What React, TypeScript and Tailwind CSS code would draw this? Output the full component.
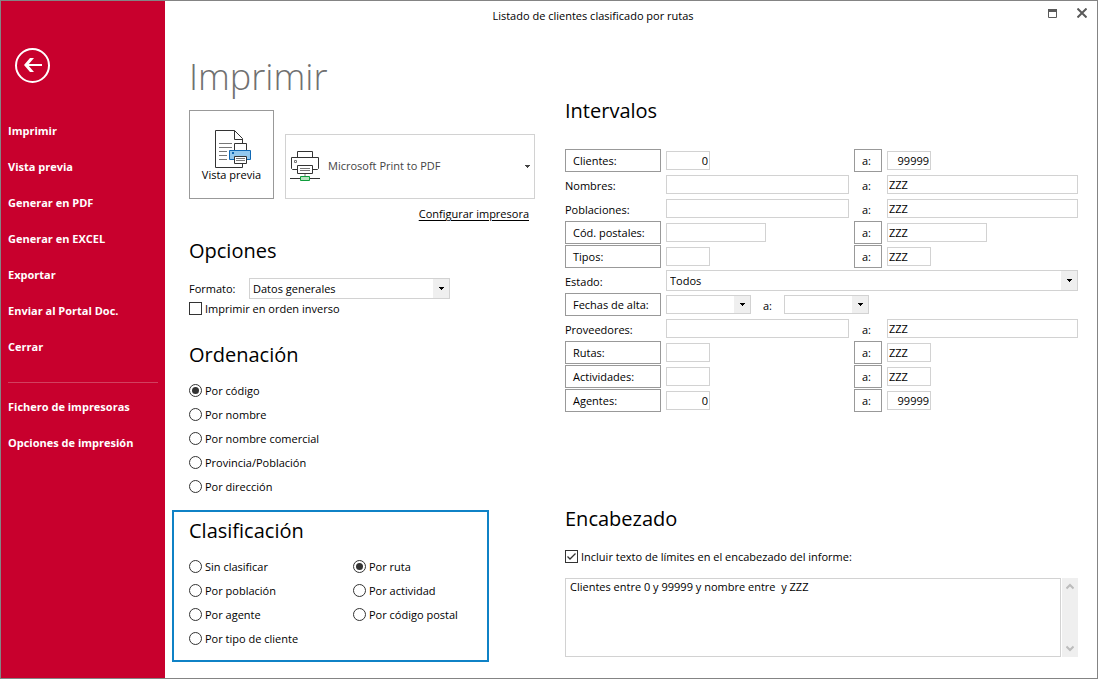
import React, { useState } from "react";

type Option = { value: string; label: string };

const menuItems = [
  "Imprimir",
  "Vista previa",
  "Generar en PDF",
  "Generar en EXCEL",
  "Exportar",
  "Enviar al Portal Doc.",
  "Cerrar",
];

const configItems = ["Fichero de impresoras", "Opciones de impresión"];

const sortOptions: Option[] = [
  { value: "codigo", label: "Por código" },
  { value: "nombre", label: "Por nombre" },
  { value: "comercial", label: "Por nombre comercial" },
  { value: "provincia", label: "Provincia/Población" },
  { value: "direccion", label: "Por dirección" },
];

const groupOptions: Option[] = [
  { value: "ninguno", label: "Sin clasificar" },
  { value: "poblacion", label: "Por población" },
  { value: "agente", label: "Por agente" },
  { value: "tipo", label: "Por tipo de cliente" },
  { value: "ruta", label: "Por ruta" },
  { value: "actividad", label: "Por actividad" },
  { value: "postal", label: "Por código postal" },
];

const PreviewIcon = () => (
  <svg width="39" height="38" viewBox="-3 0 39 38" fill="none" aria-hidden="true">
    <path d="M.5.5H19.5L27.5 8.5V37.5H.5Z" fill="#fff" stroke="#333" />
    <path d="M19.5.5V9.5H27.5" stroke="#333" />
    <path d="M4 13.5H17M4 17.5H17M4 21.5H12M4 25.5H12M4 29.5H12" stroke="#777" />
    <path d="M19.5 20V13.5H31.5V20" fill="#fff" stroke="#333" />
    <path d="M14.5 20.5H35.5V29.5H14.5Z" fill="#92c8ee" stroke="#0f68b4" />
    <path d="M17 22H19V24H17Z" fill="#0f68b4" />
    <path d="M19.5 26.5H31.5V33.5H19.5Z" fill="#fff" stroke="#333" />
    <path d="M21 28.5H30M21 30.5H30" stroke="#777" />
  </svg>
);

const PrinterIcon = () => (
  <svg width="30" height="31" viewBox="0 0 30 31" fill="none" aria-hidden="true">
    <path d="M7.5 6.5V.5H22.5V6.5" stroke="#333" />
    <path d="M7.5 18.5H2.5L1.5 17.5V6.5H28.5V17.5L27.5 18.5H22.5" stroke="#333" />
    <path d="M4.5 9.5H6.5V11.5H4.5Z" stroke="#777" />
    <path d="M7.5 14.5H22.5V22.5H7.5Z" fill="#fff" stroke="#333" />
    <path d="M10 17.5H20M10 19.5H20" stroke="#777" />
    <path d="M15 23V25" stroke="#bbb" strokeWidth="2" />
    <path d="M0 27.5H10M20 27.5H30" stroke="#333" />
    <path d="M10.5 25.5H19.5V29.5H10.5Z" fill="#b5e3be" stroke="#0f9d3c" />
  </svg>
);

const ArrowDown = () => (
  <svg width="5" height="3" viewBox="0 0 5 3" aria-hidden="true">
    <path d="M0 0H5V1H4V2H3V3H2V2H1V1H0Z" fill="currentColor" />
  </svg>
);

const Heading = ({ children }: { children: React.ReactNode }) => (
  <h2 className="text-[20px] leading-7">{children}</h2>
);

type SelectProps = {
  id?: string;
  label?: string;
  options: string[];
  className: string;
};

const Select: React.FC<SelectProps> = ({ id, label, options, className }) => (
  <div className={`grid border border-[#d2d2d2] ${className}`}>
    <select
      id={id}
      aria-label={label}
      className="col-start-1 row-start-1 h-full w-full min-w-0 appearance-none bg-white pl-[3px] pr-5 text-[11px] leading-4"
    >
      {options.map((option) => (
        <option key={option}>{option}</option>
      ))}
    </select>
    <span className="pointer-events-none col-start-1 row-start-1 flex w-4 items-center justify-center justify-self-end bg-[#efefef]">
      <ArrowDown />
    </span>
  </div>
);

type RadioProps = {
  name: string;
  option: Option;
  selected: string;
  onSelect: (value: string) => void;
};

const Radio: React.FC<RadioProps> = ({ name, option, selected, onSelect }) => (
  <label className="flex h-6 items-center gap-[3px]">
    <input
      type="radio"
      name={name}
      checked={selected === option.value}
      onChange={() => onSelect(option.value)}
      className="mb-px size-[13px] appearance-none rounded-full border border-[#333] bg-clip-content p-[2px] checked:bg-[#333]"
    />
    {option.label}
  </label>
);

const Checkbox = ({ label, defaultChecked }: { label: string; defaultChecked?: boolean }) => (
  <label className="flex h-4 items-center gap-[3px]">
    <span className="mb-px grid">
      <input
        type="checkbox"
        defaultChecked={defaultChecked}
        className="peer col-start-1 row-start-1 size-[13px] appearance-none border border-[#333] bg-white"
      />
      <svg
        width="13"
        height="13"
        viewBox="0 0 13 13"
        fill="none"
        className="pointer-events-none invisible col-start-1 row-start-1 peer-checked:visible"
      >
        <path d="M2.5 6.5L5 9L10.5 3.5" stroke="#333" strokeWidth="1.3" />
      </svg>
    </span>
    {label}
  </label>
);

type RangeRowProps = {
  id: string;
  label: string;
  lookup?: boolean;
  size: "short" | "medium" | "full";
  from?: string;
  to: string;
  numeric?: boolean;
};

const widths = {
  short: "w-11",
  medium: "w-[100px]",
  full: "w-full",
};

const RangeRow: React.FC<RangeRowProps> = ({ id, label, lookup, size, from = "", to, numeric }) => {
  const field = `h-[19px] min-w-0 border border-[#d2d2d2] px-px pb-px text-[11px] leading-4 ${widths[size]} ${
    numeric ? "text-right" : ""
  }`;

  return (
    <>
      {lookup ? (
        <button type="button" className="h-[23px] border border-[#999] pl-[7px] text-left">
          {label}
        </button>
      ) : (
        <label htmlFor={`${id}-desde`} className="pt-[2px]">
          {label}
        </label>
      )}
      <input id={`${id}-desde`} aria-label={`${label} desde`} defaultValue={from} className={field} />
      {lookup ? (
        <button type="button" className="h-[23px] border border-[#999] pl-[7px] text-left">
          a:
        </button>
      ) : (
        <label htmlFor={`${id}-hasta`} className="pl-2 pt-[2px]">
          a:
        </label>
      )}
      <input id={`${id}-hasta`} aria-label={`${label} hasta`} defaultValue={to} className={field} />
    </>
  );
};

const Sidebar = () => (
  <nav className="w-[164px] shrink-0 bg-[#c8002d] px-[7px] pt-[47px] text-[11px] font-bold leading-4 text-white">
    <button type="button" aria-label="Volver" className="ml-[7px] block">
      <svg width="35" height="35" viewBox="0 0 35 35" fill="none">
        <circle cx="17.5" cy="17.5" r="16.5" stroke="#fff" strokeWidth="2" />
        <path d="M27 17H11" stroke="#fff" strokeWidth="2" />
        <path d="M15 10H19L13 17L19 24H15L9 17Z" fill="#fff" />
      </svg>
    </button>
    <ul className="mt-[30px]">
      {menuItems.map((item) => (
        <li key={item}>
          <button type="button" className="flex h-9 w-full items-center">
            {item}
          </button>
        </li>
      ))}
    </ul>
    <hr className="mb-[6px] mt-[17px] border-[#d2405f]" />
    <ul>
      {configItems.map((item) => (
        <li key={item}>
          <button type="button" className="flex h-9 w-full items-center">
            {item}
          </button>
        </li>
      ))}
    </ul>
  </nav>
);

const TitleBar = () => (
  <header className="flex h-[30px] items-center">
    <p className="flex-1 text-center">Listado de clientes clasificado por rutas</p>
    <div className="ml-4 flex items-center pb-[6px] text-[#5a5a5a]">
      <button type="button" aria-label="Maximizar" className="flex w-[30px] justify-center">
        <svg width="9" height="9" viewBox="0 0 9 9" fill="none">
          <path d="M.5.5H8.5V8.5H.5Z" stroke="currentColor" />
          <path d="M0 0H9V3H0Z" fill="currentColor" />
        </svg>
      </button>
      <button type="button" aria-label="Cerrar" className="flex w-[30px] justify-center">
        <svg width="10" height="10" viewBox="0 0 10 10" fill="none">
          <path d="M.5.5L9.5 9.5M9.5.5L.5 9.5" stroke="currentColor" strokeWidth="2" />
        </svg>
      </button>
    </div>
  </header>
);

const App: React.FC = () => {
  const [sortBy, setSortBy] = useState("codigo");
  const [groupBy, setGroupBy] = useState("ruta");

  return (
    <div className="flex min-h-screen border border-[#848484] bg-white font-['Open_Sans','Noto_Sans',sans-serif] text-[11px] leading-4 text-black">
      <Sidebar />
      <div className="min-w-0 flex-1">
        <TitleBar />
        <main className="grid grid-cols-[400px_1fr] pr-[19px]">
          <div>
            <div className="pl-6">
              <h1 className="mt-[22px] text-[36px] font-light leading-[48px] text-[#707070]">Imprimir</h1>
              <div className="mt-[9px] flex items-end gap-[11px]">
                <button
                  type="button"
                  className="flex h-[89px] w-[85px] flex-col items-center border border-[#999] pt-[19px] text-[11px] leading-[14px]"
                >
                  <PreviewIcon />
                  Vista previa
                </button>
                <div className="grid h-[65px] w-[250px] items-center border border-[#d2d2d2] text-[#444]">
                  <select
                    aria-label="Impresora"
                    className="col-start-1 row-start-1 h-full w-full appearance-none bg-white pb-[2px] pl-[42px] pr-4 text-[11px]"
                  >
                    <option>Microsoft Print to PDF</option>
                  </select>
                  <span className="pointer-events-none col-start-1 row-start-1 flex items-center justify-between pl-1 pr-1">
                    <PrinterIcon />
                    <ArrowDown />
                  </span>
                </div>
              </div>
              <div className="mt-[5px] w-[340px] text-right text-[11px] leading-5">
                <a href="#configurar" className="underline underline-offset-2">
                  Configurar impresora
                </a>
              </div>

              <div className="mt-[13px]">
                <Heading>Opciones</Heading>
              </div>
              <div className="mt-[13px] flex items-center">
                <label htmlFor="formato" className="w-[60px]">
                  Formato:
                </label>
                <Select id="formato" options={["Datos generales"]} className="h-[21px] w-[201px]" />
              </div>
              <div className="mt-[2px]">
                <Checkbox label="Imprimir en orden inverso" />
              </div>

              <div className="mt-6">
                <Heading>Ordenación</Heading>
              </div>
              <div className="mt-[10px]">
                {sortOptions.map((option) => (
                  <Radio key={option.value} name="orden" option={option} selected={sortBy} onSelect={setSortBy} />
                ))}
              </div>
            </div>

            <section className="ml-[7px] mt-[11px] w-[317px] border-2 border-[#0f82c6] pb-[9px] pl-[15px] pt-[5px]">
              <Heading>Clasificación</Heading>
              <div className="mt-[10px] grid grid-flow-col grid-cols-[164px_1fr] grid-rows-4">
                {groupOptions.map((option) => (
                  <Radio
                    key={option.value}
                    name="clasificacion"
                    option={option}
                    selected={groupBy}
                    onSelect={setGroupBy}
                  />
                ))}
              </div>
            </section>
          </div>

          <div className="min-w-0 pt-[66px]">
            <Heading>Intervalos</Heading>
            <div className="mt-6 grid auto-rows-[23px] grid-cols-[96px_183px_28px_1fr] items-center gap-x-[5px] gap-y-px">
              <RangeRow id="clientes" label="Clientes:" lookup size="short" from="0" to="99999" numeric />
              <RangeRow id="nombres" label="Nombres:" size="full" to="ZZZ" />
              <RangeRow id="poblaciones" label="Poblaciones:" size="full" to="ZZZ" />
              <RangeRow id="postales" label="Cód. postales:" lookup size="medium" to="ZZZ" />
              <RangeRow id="tipos" label="Tipos:" lookup size="short" to="ZZZ" />

              <label htmlFor="estado" className="pt-[2px]">
                Estado:
              </label>
              <Select id="estado" options={["Todos"]} className="col-span-3 h-[21px]" />

              <button type="button" className="h-[23px] border border-[#999] pl-[7px] text-left">
                Fechas de alta:
              </button>
              <div className="col-span-3 flex items-center">
                <Select label="Fecha de alta desde" options={[""]} className="h-[19px] w-[85px]" />
                <span className="w-[33px] pt-[2px] text-center">a:</span>
                <Select label="Fecha de alta hasta" options={[""]} className="h-[19px] w-[85px]" />
              </div>

              <RangeRow id="proveedores" label="Proveedores:" size="full" to="ZZZ" />
              <RangeRow id="rutas" label="Rutas:" lookup size="short" to="ZZZ" />
              <RangeRow id="actividades" label="Actividades:" lookup size="short" to="ZZZ" />
              <RangeRow id="agentes" label="Agentes:" lookup size="short" from="0" to="99999" numeric />
            </div>

            <div className="mt-[93px]">
              <Heading>Encabezado</Heading>
            </div>
            <div className="mt-4">
              <Checkbox label="Incluir texto de límites en el encabezado del informe:" defaultChecked />
            </div>
            <div className="mt-[13px] flex h-[79px] gap-px">
              <textarea
                aria-label="Texto del encabezado"
                defaultValue="Clientes entre 0 y 99999 y nombre entre  y ZZZ"
                className="flex-1 resize-none border border-[#d2d2d2] px-1 text-[11px] leading-4"
              />
              <div className="flex w-4 flex-col items-center justify-between bg-[#efefef] py-[5px] text-[#bcbcbc]">
                <button type="button" aria-label="Subir">
                  <svg width="8" height="7" viewBox="0 0 8 7" fill="none" className="block">
                    <path d="M.5 5.5L4 2L7.5 5.5" stroke="currentColor" strokeWidth="2" />
                  </svg>
                </button>
                <button type="button" aria-label="Bajar">
                  <svg width="8" height="7" viewBox="0 0 8 7" fill="none" className="block">
                    <path d="M.5 1.5L4 5L7.5 1.5" stroke="currentColor" strokeWidth="2" />
                  </svg>
                </button>
              </div>
            </div>
          </div>
        </main>
      </div>
    </div>
  );
};

export default App;
